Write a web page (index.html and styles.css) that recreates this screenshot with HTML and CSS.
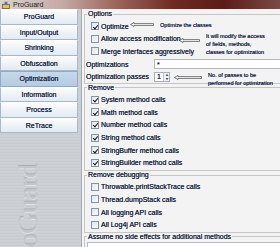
FILE: index.html
```html
<!DOCTYPE html>
<html lang="en">
<head>
  <meta charset="UTF-8" />
  <title>ProGuard</title>
  <link rel="stylesheet" href="styles.css">
</head>
<body>
  <div class="window">
    <div class="titlebar">
      <svg class="app-icon" width="8" height="8" viewBox="0 0 8 8">
        <rect x="0.5" y="3.5" width="7" height="4" fill="#e8c060" stroke="#7a5a20" stroke-width="0.8"/>
        <circle cx="4" cy="2" r="1.6" fill="#4a78c0"/>
      </svg>
      <span>ProGuard</span>
    </div>

    <div class="app">
      <aside class="sidebar">
        <div class="tab">ProGuard</div>
        <div class="tab">Input/Output</div>
        <div class="tab">Shrinking</div>
        <div class="tab">Obfuscation</div>
        <div class="tab active">Optimization</div>
        <div class="tab">Information</div>
        <div class="tab">Process</div>
        <div class="tab">ReTrace</div>
        <div class="brand"><span>ProGuard</span></div>
      </aside>

      <main class="panel">
        <fieldset class="group first">
          <legend>Options</legend>
          <label class="row"><span class="box checked"></span>Optimize</label>
          <label class="row"><span class="box"></span>Allow access modification</label>
          <label class="row"><span class="box"></span>Merge interfaces aggressively</label>
          <div class="row field-row">
            <span class="field-label">Optimizations</span>
            <span class="textfield">*</span>
          </div>
          <div class="row field-row">
            <span class="field-label">Optimization passes</span>
            <span class="spinner"><span class="spin-value">1</span><span class="spin-btns"><i>&#9652;</i><i>&#9662;</i></span></span>
          </div>
        </fieldset>

        <fieldset class="group">
          <legend>Remove</legend>
          <label class="row"><span class="box checked"></span>System method calls</label>
          <label class="row"><span class="box checked"></span>Math method calls</label>
          <label class="row"><span class="box checked"></span>Number method calls</label>
          <label class="row"><span class="box checked"></span>String method calls</label>
          <label class="row"><span class="box checked"></span>StringBuffer method calls</label>
          <label class="row"><span class="box checked"></span>StringBuilder method calls</label>
        </fieldset>

        <fieldset class="group">
          <legend>Remove debugging</legend>
          <label class="row"><span class="box"></span>Throwable.printStackTrace calls</label>
          <label class="row"><span class="box"></span>Thread.dumpStack calls</label>
          <label class="row"><span class="box"></span>All logging API calls</label>
          <label class="row"><span class="box"></span>All Log4j API calls</label>
        </fieldset>

        <fieldset class="group last">
          <legend>Assume no side effects for additional methods</legend>
          <div class="textarea"></div>
        </fieldset>

        <!-- hand-drawn notes over the form -->
        <div class="note note-optimize">
          <svg class="arrow" width="24" height="5" viewBox="0 0 24 5"><path d="M0.5 2.5 L4 0.5 L4 1.6 L23.5 1.6 L23.5 3.4 L4 3.4 L4 4.5 Z" fill="#fff" stroke="#222" stroke-width="0.6"/></svg>
          <span class="note-text">Optimize the classes</span>
        </div>
        <div class="note note-access">
          <svg class="arrow" width="21" height="5" viewBox="0 0 21 5"><path d="M0.5 2.5 L4 0.5 L4 1.6 L20.5 1.6 L20.5 3.4 L4 3.4 L4 4.5 Z" fill="#fff" stroke="#222" stroke-width="0.6"/></svg>
          <span class="note-text">It will modify the access<br>of fields, methods,<br>classes for optimization</span>
        </div>
        <div class="note note-passes">
          <svg class="arrow" width="28" height="5" viewBox="0 0 28 5"><path d="M0.5 2.5 L4 0.5 L4 1.6 L27.5 1.6 L27.5 3.4 L4 3.4 L4 4.5 Z" fill="#fff" stroke="#222" stroke-width="0.6"/></svg>
          <span class="note-text">No. of passes to be<br>performed for optimization</span>
        </div>
      </main>
    </div>
  </div>
</body>
</html>
```
FILE: styles.css
```css
* {
  margin: 0;
  padding: 0;
  box-sizing: border-box;
}

body {
  width: 280px;
  height: 247px;
  overflow: hidden;
  font-family: "Liberation Sans", Arial, sans-serif;
  font-size: 7px;
  color: #1e2a44;
  background: #f1f1f1;
}

.window {
  display: flex;
  flex-direction: column;
  height: 247px;
}

.titlebar {
  height: 9px;
  display: flex;
  align-items: center;
  gap: 3px;
  padding-left: 2px;
  background: linear-gradient(to right, #d9d2cf 0%, #c6aaa4 22%, #a06a60 40%, #6e2a22 62%, #5c1c16 80%, #7a4a44 100%);
  color: #1a1a1a;
  font-size: 7px;
}

.app-icon {
  display: block;
}

.app {
  flex: 1;
  display: flex;
  min-height: 0;
}

.sidebar {
  width: 82px;
  display: flex;
  flex-direction: column;
  border-right: 1px solid #a4abb4;
  background: repeating-linear-gradient(to bottom, #c8ccd0 0, #d3d6d9 1px, #c4c8cc 2px, #cdd0d4 3px);
}

.tab {
  height: 15.5px;
  margin-right: 3px;
  display: flex;
  align-items: center;
  justify-content: center;
  background: linear-gradient(to bottom, #fbfcfd, #e2eaf2);
  border: 1px solid #a9b8c8;
  border-top-color: #ffffff;
  color: #1e2a4a;
  text-shadow: 0 0 0.3px #1e2a4a;
}

.tab.active {
  background: linear-gradient(to bottom, #c7d8ea, #b4cbe2);
  border-color: #93a9c2;
}

.brand {
  flex: 1;
  overflow: hidden;
  padding: 31px 0 0 15px;
}

.brand span {
  display: inline-block;
  writing-mode: vertical-rl;
  transform: rotate(180deg);
  font-family: "Liberation Serif", serif;
  font-size: 28px;
  line-height: 26px;
  color: #c3c7cb;
  text-shadow: -1px 0 0 #e0e2e4, 1px 0 0 #adb2b8;
}

.panel {
  position: relative;
  flex: 1;
  padding: 1px 0 0 2px;
  background: #f3f3f3;
  overflow: hidden;
}

.group {
  border: 1px solid #c6c6c6;
  border-right: none;
  padding: 1.5px 0 1px 6px;
  margin: 0;
  min-width: 0;
}

.group.first {
  padding-top: 2px;
  padding-bottom: 0;
}

.group legend {
  padding: 0 1px;
  margin-left: -4px;
  line-height: 8px;
  text-shadow: 0 0 0.3px #1e2a44;
}

.row {
  height: 12.6px;
  display: flex;
  align-items: center;
  gap: 2px;
  text-shadow: 0 0 0.3px #1e2a44;
}

.box {
  width: 8px;
  height: 8px;
  border: 1px solid #8294ac;
  background: linear-gradient(135deg, #dfe6ee, #fbfcfd);
  position: relative;
  flex-shrink: 0;
}

.box.checked::after {
  content: "";
  position: absolute;
  left: 1.5px;
  top: 0.5px;
  width: 2px;
  height: 4px;
  border: solid #111;
  border-width: 0 1.2px 1.2px 0;
  transform: rotate(40deg);
}

.field-row {
  margin-left: -5px;
}

.field-label {
  width: 66px;
}

.textfield {
  flex: 1;
  height: 10px;
  background: #fff;
  border: 1px solid #b4b9c0;
  border-right: none;
  padding-left: 2px;
  line-height: 9px;
}

.spinner {
  display: flex;
  height: 10px;
  width: 16px;
  background: #fff;
  border: 1px solid #a9afb8;
}

.spin-value {
  flex: 1;
  padding-left: 2px;
  line-height: 8px;
}

.spin-btns {
  width: 6px;
  display: flex;
  flex-direction: column;
  border-left: 1px solid #c4c8ce;
}

.spin-btns i {
  flex: 1;
  font-style: normal;
  font-size: 4px;
  line-height: 4px;
  text-align: center;
  color: #555;
  background: #eceef1;
}

.group.last {
  padding-top: 1px;
  padding-bottom: 0;
}

.textarea {
  height: 12px;
  margin-left: -4px;
  background: #fff;
  border: 1px solid #b8bcc2;
  border-right: none;
}

.note {
  position: absolute;
  display: flex;
  align-items: flex-start;
  gap: 6px;
}

.arrow {
  display: block;
  margin-top: 1px;
}

.note-text {
  font-size: 5.6px;
  line-height: 8px;
  color: #14214a;
  text-shadow: 0 0 0.5px #14214a;
  white-space: nowrap;
}

.note-optimize {
  left: 48px;
  top: 12px;
}

.note-access {
  left: 97px;
  top: 23px;
}

.note-passes {
  left: 92px;
  top: 62px;
}

.note-access .arrow {
  margin-top: 6px;
}

.note-passes .arrow {
  margin-top: 4px;
}
```
